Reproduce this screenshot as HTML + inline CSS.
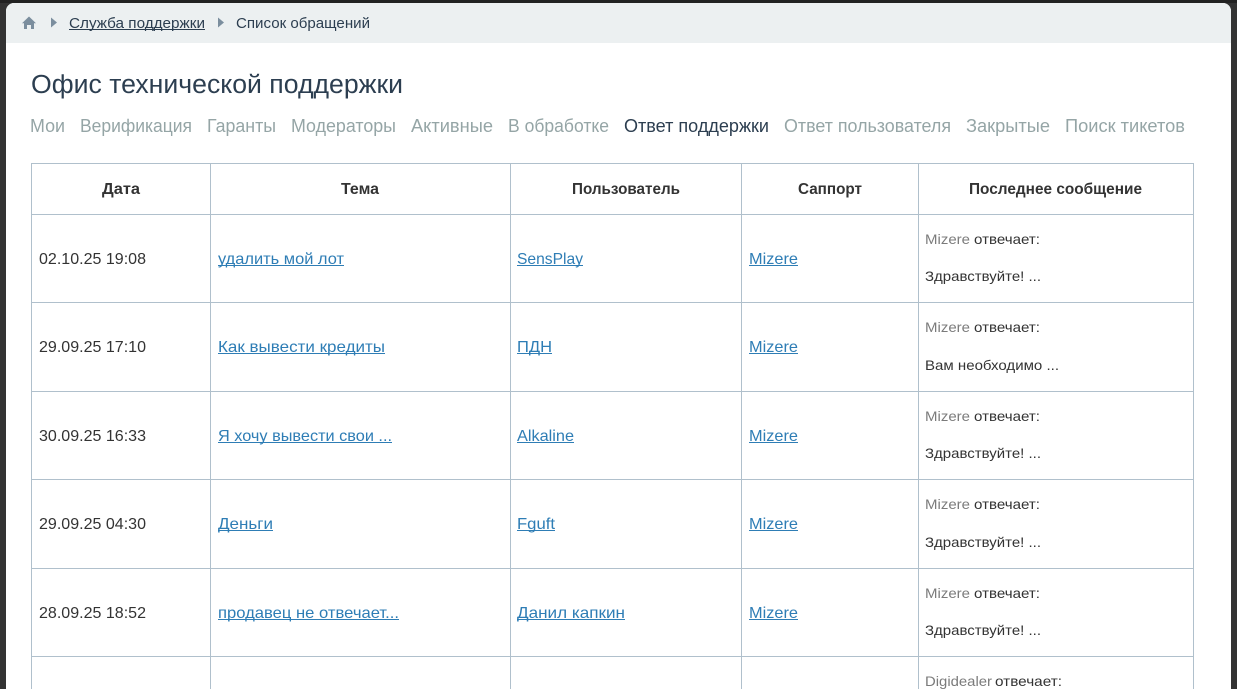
<!DOCTYPE html>
<html lang="ru"><head><meta charset="utf-8"><title>Офис технической поддержки</title>
<style>
html,body{margin:0;padding:0;width:1237px;height:689px;overflow:hidden;background:#333}
svg{display:block}
text{font-family:"Liberation Sans","DejaVu Sans",sans-serif;font-size:16px;fill:#333}
.bc{font-size:15px;fill:#2c3e50}
.h{font-size:25.5px;fill:#2c3e50}
.t{font-size:18px;fill:#95a5a6}
.a{fill:#2c3e50}
.th{font-weight:bold;fill:#333}
.l{fill:#2e7db5}
.s{font-size:14px;fill:#333}
.g{fill:#7b7b7b}
</style></head><body>
<svg width="1237" height="689" viewBox="0 0 1237 689" xmlns="http://www.w3.org/2000/svg">
<rect width="1237" height="3" fill="#222"/>
<path d="M6 689V11a8 8 0 0 1 8-8H1223a8 8 0 0 1 8 8V689Z" fill="#fff"/>
<path d="M6 43V11a8 8 0 0 1 8-8H1223a8 8 0 0 1 8 8V43Z" fill="#ecf0f1"/>
<path d="M29 16.500L36 23.300H34V29H31V25H27V29H24V23.300H22Z" fill="#7b8e9e"/>
<path d="M51 17.500L57 22.500L51 27.500Z" fill="#7b8e9e"/>
<path d="M218 17.500L224 22.500L218 27.500Z" fill="#7b8e9e"/>
<text class="bc" x="69" y="28" textLength="136" lengthAdjust="spacingAndGlyphs">Служба поддержки</text>
<rect x="69" y="29" width="136" height="1" fill="#2c3e50"/>
<text class="bc" x="236" y="28" textLength="134" lengthAdjust="spacingAndGlyphs">Список обращений</text>
<text class="h" x="31" y="93" textLength="372" lengthAdjust="spacingAndGlyphs">Офис технической поддержки</text>
<text class="t" x="30" y="132" textLength="35" lengthAdjust="spacingAndGlyphs">Мои</text>
<text class="t" x="80" y="132" textLength="112" lengthAdjust="spacingAndGlyphs">Верификация</text>
<text class="t" x="207" y="132" textLength="69" lengthAdjust="spacingAndGlyphs">Гаранты</text>
<text class="t" x="291" y="132" textLength="105" lengthAdjust="spacingAndGlyphs">Модераторы</text>
<text class="t" x="411" y="132" textLength="82" lengthAdjust="spacingAndGlyphs">Активные</text>
<text class="t" x="508" y="132" textLength="101" lengthAdjust="spacingAndGlyphs">В обработке</text>
<text class="t a" x="624" y="132" textLength="145" lengthAdjust="spacingAndGlyphs">Ответ поддержки</text>
<text class="t" x="784" y="132" textLength="167" lengthAdjust="spacingAndGlyphs">Ответ пользователя</text>
<text class="t" x="966" y="132" textLength="84" lengthAdjust="spacingAndGlyphs">Закрытые</text>
<text class="t" x="1065" y="132" textLength="120" lengthAdjust="spacingAndGlyphs">Поиск тикетов</text>
<g fill="#b0c0cc">
<rect x="31" y="163" width="1163" height="1"/><rect x="31" y="214" width="1163" height="1"/><rect x="31" y="302" width="1163" height="1"/><rect x="31" y="391" width="1163" height="1"/><rect x="31" y="479" width="1163" height="1"/><rect x="31" y="568" width="1163" height="1"/><rect x="31" y="656" width="1163" height="1"/>
<rect x="31" y="163" width="1" height="526"/><rect x="210" y="163" width="1" height="526"/><rect x="510" y="163" width="1" height="526"/><rect x="741" y="163" width="1" height="526"/><rect x="918" y="163" width="1" height="526"/><rect x="1193" y="163" width="1" height="526"/>
</g>
<text class="th" x="102" y="194" textLength="38" lengthAdjust="spacingAndGlyphs">Дата</text>
<text class="th" x="341" y="194" textLength="38" lengthAdjust="spacingAndGlyphs">Тема</text>
<text class="th" x="572" y="194" textLength="108" lengthAdjust="spacingAndGlyphs">Пользователь</text>
<text class="th" x="798" y="194" textLength="64" lengthAdjust="spacingAndGlyphs">Саппорт</text>
<text class="th" x="969" y="194" textLength="173" lengthAdjust="spacingAndGlyphs">Последнее сообщение</text>

<text x="39" y="264" textLength="107" lengthAdjust="spacingAndGlyphs">02.10.25 19:08</text>
<text class="l" x="218" y="264" textLength="126" lengthAdjust="spacingAndGlyphs">удалить мой лот</text><rect x="218" y="265" width="126" height="1" fill="#2e7db5"/>
<text class="l" x="517" y="264" textLength="66" lengthAdjust="spacingAndGlyphs">SensPlay</text><rect x="517" y="265" width="66" height="1" fill="#2e7db5"/>
<text class="l" x="749" y="264" textLength="49" lengthAdjust="spacingAndGlyphs">Mizere</text><rect x="749" y="265" width="49" height="1" fill="#2e7db5"/>
<text class="s g" x="925" y="244" textLength="45" lengthAdjust="spacingAndGlyphs">Mizere</text><text class="s" x="974" y="244" textLength="66" lengthAdjust="spacingAndGlyphs">отвечает:</text>
<text class="s" x="925" y="281" textLength="116" lengthAdjust="spacingAndGlyphs">Здравствуйте! ...</text>

<text x="39" y="352" textLength="107" lengthAdjust="spacingAndGlyphs">29.09.25 17:10</text>
<text class="l" x="218" y="352" textLength="167" lengthAdjust="spacingAndGlyphs">Как вывести кредиты</text><rect x="218" y="353" width="167" height="1" fill="#2e7db5"/>
<text class="l" x="517" y="352" textLength="35" lengthAdjust="spacingAndGlyphs">ПДН</text><rect x="517" y="353" width="35" height="1" fill="#2e7db5"/>
<text class="l" x="749" y="352" textLength="49" lengthAdjust="spacingAndGlyphs">Mizere</text><rect x="749" y="353" width="49" height="1" fill="#2e7db5"/>
<text class="s g" x="925" y="332" textLength="45" lengthAdjust="spacingAndGlyphs">Mizere</text><text class="s" x="974" y="332" textLength="66" lengthAdjust="spacingAndGlyphs">отвечает:</text>
<text class="s" x="925" y="370" textLength="134" lengthAdjust="spacingAndGlyphs">Вам необходимо ...</text>

<text x="39" y="441" textLength="107" lengthAdjust="spacingAndGlyphs">30.09.25 16:33</text>
<text class="l" x="218" y="441" textLength="174" lengthAdjust="spacingAndGlyphs">Я хочу вывести свои ...</text><rect x="218" y="442" width="174" height="1" fill="#2e7db5"/>
<text class="l" x="517" y="441" textLength="57" lengthAdjust="spacingAndGlyphs">Alkaline</text><rect x="517" y="442" width="57" height="1" fill="#2e7db5"/>
<text class="l" x="749" y="441" textLength="49" lengthAdjust="spacingAndGlyphs">Mizere</text><rect x="749" y="442" width="49" height="1" fill="#2e7db5"/>
<text class="s g" x="925" y="421" textLength="45" lengthAdjust="spacingAndGlyphs">Mizere</text><text class="s" x="974" y="421" textLength="66" lengthAdjust="spacingAndGlyphs">отвечает:</text>
<text class="s" x="925" y="458" textLength="116" lengthAdjust="spacingAndGlyphs">Здравствуйте! ...</text>

<text x="39" y="529" textLength="107" lengthAdjust="spacingAndGlyphs">29.09.25 04:30</text>
<text class="l" x="218" y="529" textLength="55" lengthAdjust="spacingAndGlyphs">Деньги</text><rect x="218" y="530" width="55" height="1" fill="#2e7db5"/>
<text class="l" x="517" y="529" textLength="38" lengthAdjust="spacingAndGlyphs">Fguft</text><rect x="517" y="530" width="38" height="1" fill="#2e7db5"/>
<text class="l" x="749" y="529" textLength="49" lengthAdjust="spacingAndGlyphs">Mizere</text><rect x="749" y="530" width="49" height="1" fill="#2e7db5"/>
<text class="s g" x="925" y="509" textLength="45" lengthAdjust="spacingAndGlyphs">Mizere</text><text class="s" x="974" y="509" textLength="66" lengthAdjust="spacingAndGlyphs">отвечает:</text>
<text class="s" x="925" y="547" textLength="116" lengthAdjust="spacingAndGlyphs">Здравствуйте! ...</text>

<text x="39" y="618" textLength="107" lengthAdjust="spacingAndGlyphs">28.09.25 18:52</text>
<text class="l" x="218" y="618" textLength="181" lengthAdjust="spacingAndGlyphs">продавец не отвечает...</text><rect x="218" y="619" width="181" height="1" fill="#2e7db5"/>
<text class="l" x="517" y="618" textLength="108" lengthAdjust="spacingAndGlyphs">Данил капкин</text><rect x="517" y="619" width="108" height="1" fill="#2e7db5"/>
<text class="l" x="749" y="618" textLength="49" lengthAdjust="spacingAndGlyphs">Mizere</text><rect x="749" y="619" width="49" height="1" fill="#2e7db5"/>
<text class="s g" x="925" y="598" textLength="45" lengthAdjust="spacingAndGlyphs">Mizere</text><text class="s" x="974" y="598" textLength="66" lengthAdjust="spacingAndGlyphs">отвечает:</text>
<text class="s" x="925" y="635" textLength="116" lengthAdjust="spacingAndGlyphs">Здравствуйте! ...</text>

<text class="s g" x="925" y="686" textLength="67" lengthAdjust="spacingAndGlyphs">Digidealer</text><text class="s" x="995" y="686" textLength="67" lengthAdjust="spacingAndGlyphs">отвечает:</text>
</svg>
</body></html>
